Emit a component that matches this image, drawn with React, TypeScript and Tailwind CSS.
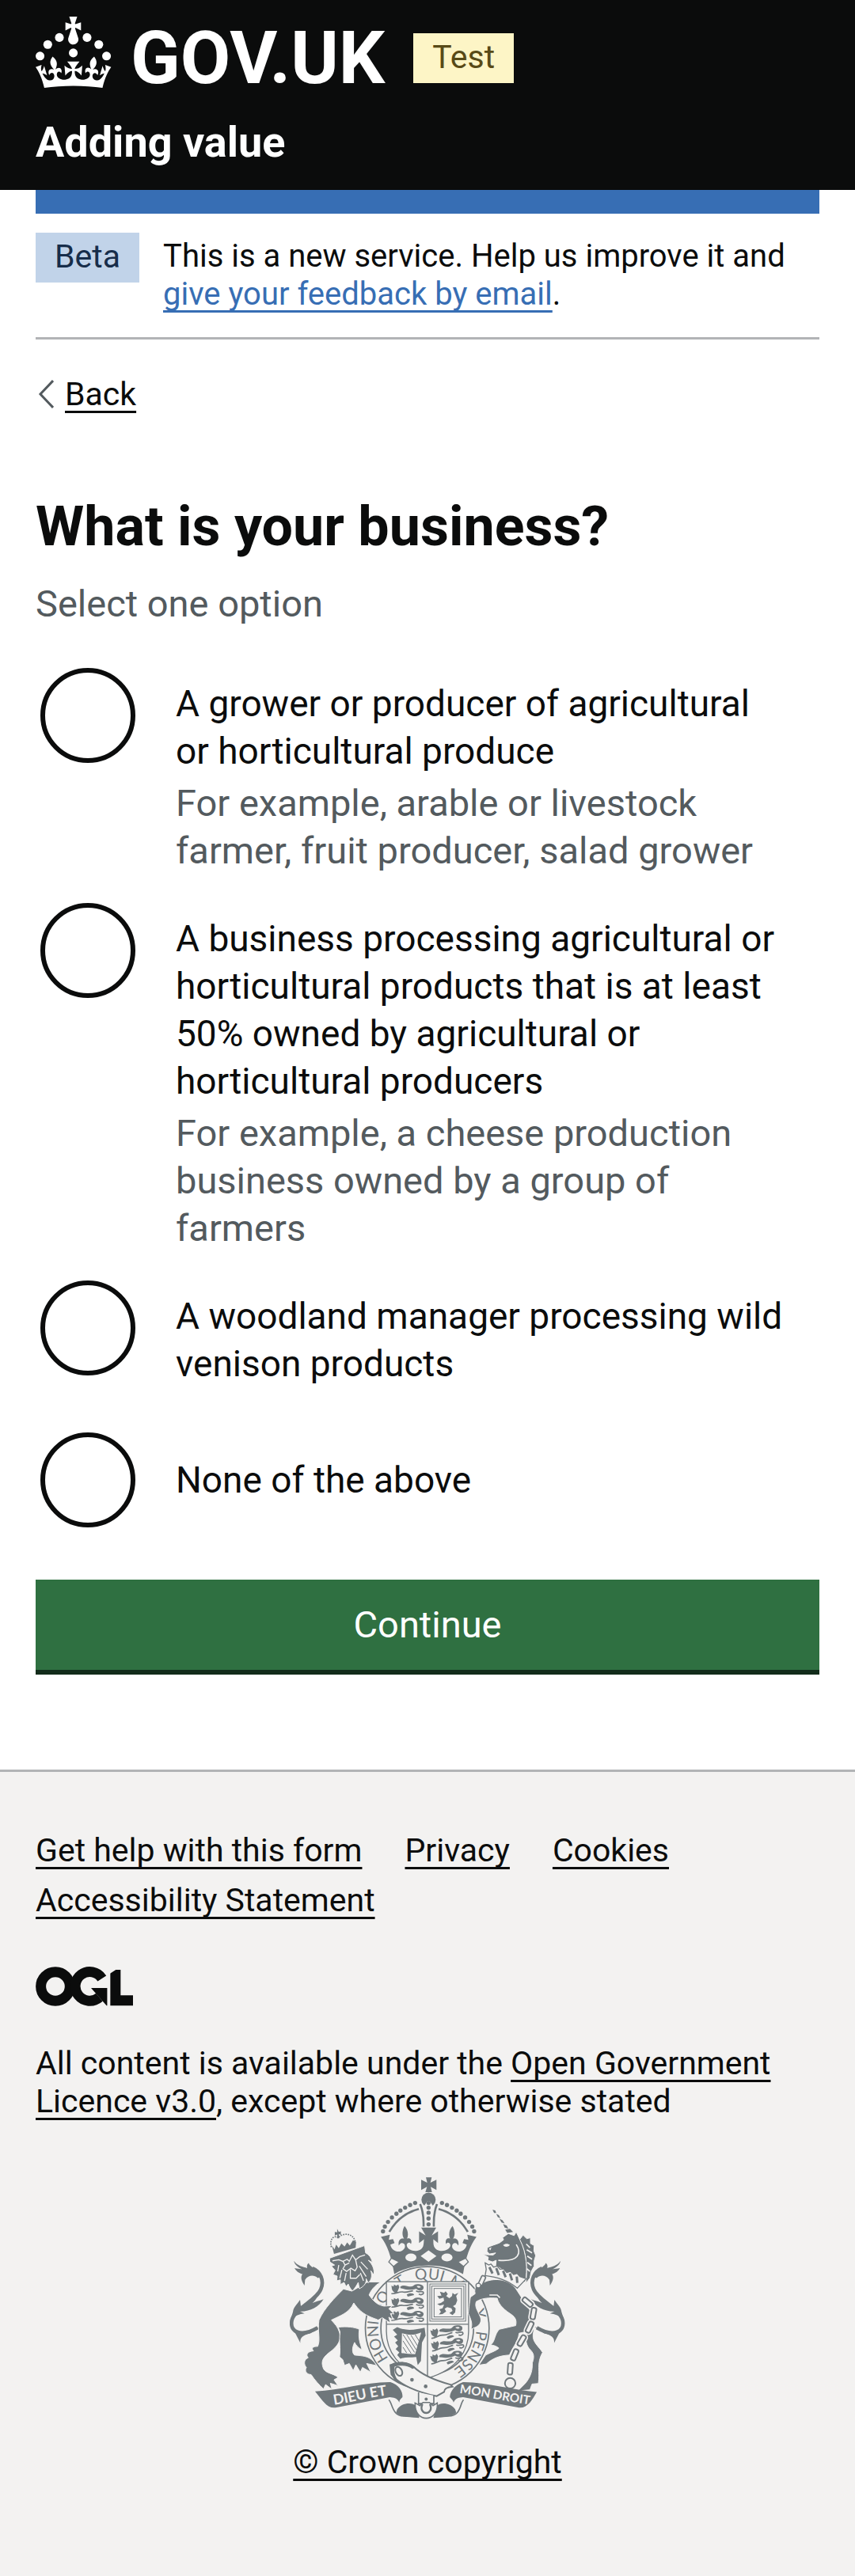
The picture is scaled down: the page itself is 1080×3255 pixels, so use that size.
import React from "react";

const linkBase =
  "underline decoration-[3px] underline-offset-[7px] [text-decoration-skip-ink:none]";

const options = [
  {
    id: "grower",
    label: "A grower or producer of agricultural or horticultural produce",
    hint: "For example, arable or livestock farmer, fruit producer, salad grower",
  },
  {
    id: "processor",
    label:
      "A business processing agricultural or horticultural products that is at least 50% owned by agricultural or horticultural producers",
    hint: "For example, a cheese production business owned by a group of farmers",
  },
  {
    id: "woodland",
    label: "A woodland manager processing wild venison products",
  },
  { id: "none", label: "None of the above" },
];

function Crown() {
  return (
    <svg
      viewBox="0 0 64 60"
      className="h-[90px] w-24 shrink-0"
      fill="currentColor"
      aria-hidden="true"
    >
      <circle cx="20" cy="17.6" r="3.7" />
      <circle cx="10.2" cy="23.5" r="3.7" />
      <circle cx="3.7" cy="33.2" r="3.7" />
      <circle cx="31.7" cy="30.6" r="3.7" />
      <circle cx="43.3" cy="17.6" r="3.7" />
      <circle cx="53.2" cy="23.5" r="3.7" />
      <circle cx="59.7" cy="33.2" r="3.7" />
      <path d="M33.1,9.8c.2-.1.3-.3.5-.5l4.6,2.4v-6.8l-4.6,1.5c-.1-.2-.3-.3-.5-.5l1.9-5.9h-6.7l1.9,5.9c-.2.1-.3.3-.5.5l-4.6-1.5v6.8l4.6-2.4c.1.2.3.3.5.5l-2.6,8c-.9,2.8,1.2,5.7,4.1,5.7h0c3,0,5.1-2.9,4.1-5.7l-2.6-8ZM37,37.9s-3.4,3.8-4.1,6.1c2.2,0,4.2-.5,6.4-2.8l-.7,8.5c-2-2.8-4.4-4.1-5.7-3.8.1,3.1.5,6.7,5.8,7.2,3.7.3,6.7-1.5,7-3.8.4-2.6-2-4.3-3.7-1.6-1.4-4.5,2.4-6.1,4.9-3.2-1.9-4.5-1.8-7.7,2.4-10.9,3,4,2.6,7.3-1.2,11.1,2.4-1.3,6.2,0,4,4.6-1.2-2.8-3.7-2.2-4.2.2-.3,1.7.7,3.7,3,4.2,1.9.3,4.7-.9,7-5.9-1.3,0-2.4.7-3.9,1.7l2.4-8c.6,2.3,1.4,3.7,2.2,4.5.6-1.6.5-2.8,0-5.3l5,1.8c-2.6,3.6-5.2,8.7-7.3,17.5-7.4-1.1-15.7-1.7-24.5-1.7h0c-8.8,0-17.1.6-24.5,1.7-2.1-8.9-4.7-13.9-7.3-17.5l5-1.8c-.5,2.5-.6,3.7,0,5.3.8-.8,1.6-2.3,2.2-4.5l2.4,8c-1.5-1-2.6-1.7-3.9-1.7,2.3,5,5.2,6.2,7,5.9,2.3-.4,3.3-2.4,3-4.2-.5-2.4-3-3.1-4.2-.2-2.2-4.6,1.6-6,4-4.6-3.7-3.7-4.2-7.1-1.2-11.1,4.2,3.2,4.3,6.4,2.4,10.9,2.5-2.8,6.3-1.3,4.9,3.2-1.8-2.7-4.1-1-3.7,1.6.3,2.3,3.3,4.1,7,3.8,5.4-.5,5.7-4.2,5.8-7.2-1.3-.2-3.7,1-5.7,3.8l-.7-8.5c2.2,2.3,4.2,2.7,6.4,2.8-.7-2.3-4.1-6.1-4.1-6.1h10.6,0Z" />
    </svg>
  );
}

function OglLogo() {
  return (
    <svg
      viewBox="0 0 483 196"
      className="h-[50px] w-[123px]"
      role="img"
      aria-label="Open Government Licence"
      fill="none"
      stroke="currentColor"
      strokeWidth="51"
    >
      <circle cx="98" cy="98" r="72" />
      <path d="M329 58.500A72 72 0 1 0 316 152" />
      <path
        d="M275 105.700h80v87.800h-3L299 133z"
        fill="currentColor"
        stroke="none"
      />
      <path d="M396 16V168H483" />
      <path d="M366 0h56L366 36z" fill="#f3f2f1" stroke="none" />
    </svg>
  );
}

const pearls = [
  [408, 268], [415, 250], [427, 232], [442, 215], [459, 201],
  [474, 189], [492, 178], [511, 168], [530, 160],
];

const chain = [
  [957, 537, -50], [979, 580, 10], [965, 632, 25], [935, 683, 30],
  [908, 737, 22], [891, 790, 4],
];

function Tail() {
  return (
    <g>
      <path d="M140 408C170 420 186 455 172 488C155 530 75 560 62 605C52 650 95 672 160 634" fill="none" stroke="#6f777b" strokeWidth="14" />
      <path d="M70 380C82 400 105 402 120 408C118 398 120 392 126 388C128 402 160 410 174 440L160 445C145 432 125 434 112 452L110 474C98 455 94 442 102 430C88 428 78 418 72 408C84 410 92 410 100 412C82 402 72 394 70 380Z" />
      <path d="M158 500C150 530 120 545 96 552L93 528C82 545 68 555 66 574L58 600C75 590 90 582 110 580C100 574 92 572 86 572C125 576 165 556 182 526C165 532 150 536 140 540C154 528 160 516 158 500Z" />
      <path d="M70 645L94 692C92 672 104 662 132 656L172 628C125 652 90 652 70 645Z" />
    </g>
  );
}

function Passant({ x, y }: { x: number; y: number }) {
  return (
    <g transform={`translate(${x} ${y})`}>
      <path d="M2 4L10 8L12 0L20 5L28 0L32 10L28 20C24 26 26 30 20 34C14 30 6 26 4 18Z" />
      <path d="M36 8C50 -2 62 8 76 8C88 8 86 -1 100 -1C122 -1 128 8 122 18C116 26 104 24 96 16C86 20 60 22 46 16L36 14Z" />
      <path d="M2 34C14 38 30 26 44 28C60 32 74 24 84 24M96 24C104 32 112 24 122 28C128 36 114 42 106 36" fill="none" stroke="#6f777b" strokeWidth="5" />
      <path d="M60 38C70 30 88 32 88 40L64 46Z" />
      <path d="M98 6C106 4 112 6 114 10C108 14 100 12 98 6Z" fill="#f3f2f1" />
    </g>
  );
}

function RoyalArms() {
  return (
    <svg
      viewBox="54 62 1046 920"
      className="h-[306px] w-[348px]"
      fill="#6f777b"
      aria-hidden="true"
    >
      {/* Garter */}
      <ellipse cx="576" cy="636" rx="235" ry="234" fill="#f3f2f1" stroke="#6f777b" strokeWidth="5" />
      <ellipse cx="576" cy="636" rx="176" ry="176" fill="none" stroke="#6f777b" strokeWidth="5" />
      <path id="garter-line" d="M576 822A186 186 0 0 1 576 450A186 186 0 0 1 576 822" fill="none" />
      <g fontFamily="Lato, sans-serif" fontSize="58" textAnchor="middle">
        <text><textPath href="#garter-line" startOffset="244">HONI</textPath></text>
        <text><textPath href="#garter-line" startOffset="390">SO</textPath></text>
        <text><textPath href="#garter-line" startOffset="486">T</textPath></text>
        <text><textPath href="#garter-line" startOffset="592">QUI</textPath></text>
        <text><textPath href="#garter-line" startOffset="692">M</textPath></text>
        <text><textPath href="#garter-line" startOffset="826">Y</textPath></text>
        <text><textPath href="#garter-line" startOffset="974">PENSE</textPath></text>
      </g>

      {/* Shield */}
      <path d="M421 459H733V640C736 720 690 794 577 826C464 794 418 720 421 640Z" fill="#f3f2f1" stroke="#6f777b" strokeWidth="4" />
      <path d="M577 460V824M421 621H733" fill="none" stroke="#6f777b" strokeWidth="4" />
      <Passant x={438} y={470} />
      <Passant x={438} y={521} />
      <Passant x={438} y={571} />
      <g fill="none" stroke="#6f777b" strokeWidth="3">
        <rect x="586" y="468" width="136" height="141" />
        <rect x="593" y="476" width="122" height="125" />
        <rect x="602" y="485" width="104" height="108" />
      </g>
      <path d="M624 497L640 502L646 496L654 506L648 514L660 522L670 514L672 502L680 508L694 502L686 514L690 530L684 546L674 552L684 560L682 576L672 586L660 578L672 570L668 560L652 556L642 562L648 572L634 582L620 584L628 574L622 564L634 560L640 546L624 550L614 544L628 540L640 532L638 520L622 524L614 514L630 512Z" />
      <g transform="rotate(-8 650 700)">
        <Passant x={594} y={632} />
        <Passant x={590} y={680} />
        <Passant x={580} y={728} />
      </g>
      <path d="M445 642L462 632C500 650 535 640 566 634L570 664L556 690L552 760L540 776L534 745C510 748 490 745 474 752L462 738L470 728L456 715L466 705L454 690L464 682L450 668L462 660Z" />
      <path d="M480 655C510 665 535 660 553 652L530 735C510 735 490 732 478 730Z" fill="#f3f2f1" />
      <path d="M484 660L528 728M484 684L515 732M484 708L498 730M498 660L534 718M514 662L540 704M530 660L546 686" stroke="#6f777b" strokeWidth="3" />

      {/* Crown */}
      <path d="M571 63H593L588 83L611 72V111L589 99L594 119H569L575 99L553 111V72L576 83Z" />
      <circle cx="581" cy="148" r="27" />
      <path d="M545 165L562 250H600L618 165L598 172L590 160C585 150 577 150 572 160L564 172Z" fill="#f3f2f1" />
      <path d="M549 164C560 190 563 220 562 250M613 164C603 190 600 220 601 250" fill="none" stroke="#6f777b" strokeWidth="8" />
      {[160, 178, 197, 219, 241].map((y) => (
        <circle key={y} cx="581" cy={y} r="8" />
      ))}
      <path d="M432 270C458 225 498 195 544 183M730 270C704 225 664 195 619 183" fill="none" stroke="#6f777b" strokeWidth="8" />
      {pearls.map(([x, y]) => (
        <g key={x}>
          <circle cx={x} cy={y} r="8" />
          <circle cx={1162 - x} cy={y} r="8" />
        </g>
      ))}
      <path d="M400 289L434 281L430 300L446 297L452 312L436 318C440 344 474 356 490 332C494 322 490 312 480 312C474 312 470 318 468 322C464 304 474 292 488 296C478 280 482 262 490 248C503 262 506 282 499 296C512 290 520 304 514 316C510 308 500 310 498 320C500 345 548 352 560 326C564 314 562 306 564 298L545 312V268L570 284L553 254H610L593 284L617 268V312L599 298C600 306 598 314 602 326C614 352 662 345 664 320C662 310 652 308 648 316C642 304 650 290 663 296C656 282 659 262 672 248C680 262 684 280 674 296C688 292 698 304 694 322C692 318 688 312 682 312C672 312 668 322 672 332C688 356 722 344 726 318L710 312L716 297L732 300L728 281L763 289C740 318 722 366 712 430C640 386 522 386 451 430C440 366 424 318 400 289Z" />
      <g fill="#f3f2f1">
        <ellipse cx="514" cy="367" rx="21" ry="15" />
        <ellipse cx="651" cy="367" rx="21" ry="15" />
        <path d="M581 340L611 362L581 384L551 362Z" />
        <path d="M440 370L470 384L448 402L430 384Z" stroke="#6f777b" strokeWidth="4" />
        <path d="M722 370L692 384L714 402L732 384Z" stroke="#6f777b" strokeWidth="4" />
      </g>

      {/* Lion */}
      <Tail />
      <g stroke="#f3f2f1" strokeWidth="3">
        <path d="M258 487C225 520 185 560 165 605C158 645 172 680 160 705C140 705 135 712 144 722C118 725 115 738 124 748C105 756 108 775 117 785C108 800 120 812 135 812C150 835 165 850 182 867L190 850L214 868L208 845L237 854L222 832L238 823C215 805 195 810 182 790C170 760 180 745 215 720C245 695 250 670 242 650C236 630 225 620 212 605C240 590 280 580 297 540C330 590 370 595 390 605L405 596L436 616L430 594L446 604L436 580L450 582L430 562L444 550L412 552C385 548 370 530 355 510C362 492 375 475 400 460L350 460L290 495Z" />
        <path d="M238 632C270 628 300 632 318 640C312 680 325 700 328 718C315 712 305 700 300 690C290 710 290 730 300 738C330 742 360 738 384 778L346 770L362 803L330 785L322 803L305 775L295 797L280 770L262 777L255 755L243 745C248 710 240 690 245 650Z" />
        <path d="M205 370L338 322L342 350C355 356 364 368 368 386L352 378C368 392 376 412 374 434L362 418C368 438 364 452 352 464L344 448C346 466 334 478 318 486L314 462C308 474 300 486 292 494C284 486 280 478 276 468L268 478L260 462L246 470L246 452L232 456L234 438L218 432L226 416L212 400L224 396L206 384Z" />
      </g>
      <g fill="none" stroke="#f3f2f1" strokeWidth="4">
        <path d="M216 380L240 376L256 382L272 374L280 382L292 358L304 376L320 364L340 358M256 382L264 396L280 388M264 396L256 410L270 420L286 408L302 418L310 404L304 376M284 412V446H306L320 432M324 384L350 412M318 400L344 440M322 426L334 456M240 396L236 420M252 414L244 446M268 426L262 456" />
      </g>
      <path d="M234 258L240 270L248 268V282L240 278L242 294H234L234 280L225 284V270L234 272Z" />
      <path d="M212 328C204 300 220 280 238 292C256 272 294 274 302 306" fill="none" stroke="#6f777b" strokeWidth="5" strokeDasharray="5 4" />
      <path d="M214 322L224 336L230 318L240 332L250 314L262 326L272 310L282 322L294 302L306 308L304 330L222 354Z" />

      {/* Unicorn */}
      <g transform="translate(1152 0) scale(-1 1)">
        <Tail />
      </g>
      <path d="M824 186L834 188L838 198L830 198ZM838 202L848 206L854 218L844 214ZM850 220L862 226L870 238L858 234ZM864 240L878 246L884 258L870 254ZM872 262L890 258L902 270L880 274Z" />
      <g stroke="#f3f2f1" strokeWidth="3">
        <path d="M940 282L954 296L968 292L968 314L982 322L981 342L988 360L982 380L982 400L971 420L966 445L950 466C958 410 952 340 926 300Z" />
        <path d="M862 292L884 276L906 284L914 270L928 300C954 350 958 415 948 462L900 436L860 412L836 398L838 378L824 384L806 378L808 366L788 356L826 358L836 350L812 354L803 344L804 330C818 322 835 318 850 312L866 300Z" />
        <path d="M758 505C752 480 765 462 790 462C825 445 880 445 912 485C935 520 950 545 968 570C985 605 985 625 978 660C975 690 1000 705 1014 728C990 770 1005 800 998 846L974 848L966 870L920 874L948 846C970 820 976 795 975 768C985 740 980 730 962 712C948 690 952 680 948 650L925 655C920 690 905 700 888 738C850 740 825 750 800 772L772 776L798 738C825 725 840 720 848 712C835 700 822 702 818 698C835 685 830 660 850 640L912 626C918 600 905 590 890 580C860 560 845 540 842 522C815 520 785 520 762 535C755 555 768 570 776 590C786 608 776 625 760 632L742 640C750 615 740 600 732 580C734 555 738 530 740 518Z" />
      </g>
      <path d="M864 320C872 313 884 314 890 320C882 329 870 329 864 320ZM810 334L820 328L816 340Z" fill="#f3f2f1" />
      <path d="M914 318C935 350 925 385 846 378M952 316L966 330M954 338L974 350M956 362L974 374M956 386L972 398M954 410L966 420M812 510H842L852 520" fill="none" stroke="#f3f2f1" strokeWidth="5" />
      <path d="M796 388L810 396L818 392L828 404L842 400L852 412L866 410L878 424L892 420L904 432L918 428L928 440L952 448L918 484C880 452 840 442 796 436L800 412Z" fill="#f3f2f1" stroke="#6f777b" strokeWidth="4" />
      <path d="M812 404L824 428M838 408L848 434M864 418L874 442M890 428L898 454M916 440L918 464" stroke="#6f777b" strokeWidth="9" />
      <g fill="none" strokeWidth="16" stroke="#f3f2f1">
        {chain.map(([x, y, a]) => (
          <rect key={y} x={x - 9} y={y - 22} width="18" height="44" rx="7" transform={`rotate(${a} ${x} ${y})`} />
        ))}
      </g>
      <g fill="#f3f2f1" strokeWidth="6" stroke="#6f777b">
        {chain.map(([x, y, a]) => (
          <rect key={y} x={x - 9} y={y - 22} width="18" height="44" rx="7" transform={`rotate(${a} ${x} ${y})`} />
        ))}
        <circle cx="891" cy="845" r="20" />
        <rect x="776" y="436" width="16" height="38" rx="6" transform="rotate(25 784 455)" strokeWidth="5" />
        <circle cx="770" cy="474" r="9" strokeWidth="4" />
      </g>

      {/* Garter strap and buckle */}
      <path d="M436 776C470 762 500 764 524 782C560 818 620 838 664 850L672 858C650 860 640 868 640 878L612 894C540 880 470 850 440 812Z" fill="#f3f2f1" stroke="#6f777b" strokeWidth="6" />
      <path d="M436 776L448 768C490 760 512 768 530 786L520 790C500 776 470 776 452 782C448 810 456 826 478 850C444 838 436 810 436 776Z" />
      <ellipse cx="468" cy="800" rx="12" ry="18" fill="none" stroke="#6f777b" strokeWidth="6" transform="rotate(-28 468 800)" />
      <circle cx="518" cy="832" r="7" />
      <circle cx="570" cy="857" r="7" />
      <path d="M543 880V922H601V892" fill="#f3f2f1" stroke="#6f777b" strokeWidth="5" />
      <circle cx="572" cy="905" r="6" />

      {/* Motto ribbon */}
      <path d="M150 876C250 872 340 840 436 841C468 850 484 878 482 898C474 906 470 910 470 918C462 900 446 900 434 898L232 937C196 944 180 912 150 876Z" />
      <path d="M992 878C900 872 800 840 712 841C682 850 662 878 662 898C668 906 674 910 676 918C684 900 698 900 712 898L920 937C956 944 976 906 992 878Z" />
      <path d="M430 908C445 920 440 970 490 970L545 974M714 908C700 920 706 970 656 970L600 974" fill="none" stroke="#6f777b" strokeWidth="5" />
      <path d="M462 944C480 916 522 918 532 930L546 974C510 974 470 974 458 956ZM682 944C664 916 622 918 614 930L600 974C636 974 674 974 686 956Z" />
      <path d="M530 920L548 930L560 918H584L598 930L614 920C618 960 592 978 572 978C552 978 528 960 530 920Z" fill="#f3f2f1" stroke="#6f777b" strokeWidth="5" />
      <path d="M558 924C548 944 560 958 572 958C584 958 596 944 586 924" fill="none" stroke="#6f777b" strokeWidth="7" />
      <path id="motto-left" d="M222 927C300 916 370 893 462 886" fill="none" />
      <path id="motto-right" d="M698 882C780 892 860 912 990 930" fill="none" />
      <g fill="#f3f2f1" fontFamily="Lato, sans-serif" fontWeight="700" fontSize="54">
        <text><textPath href="#motto-left">DIEU ET</textPath></text>
        <text fontSize="46"><textPath href="#motto-right">MON DROIT</textPath></text>
      </g>
    </svg>
  );
}

export default function App() {
  return (
    <div className="min-h-screen bg-[#f3f2f1] font-[Roboto,sans-serif] text-[41px] leading-[48px] text-[#0b0c0c]">
      <header className="bg-[#0b0c0c] px-[45px] pt-[21px] pb-[30px] text-white">
        <div className="flex items-start">
          <a href="#" aria-label="GOV.UK" className="flex items-start gap-6">
            <Crown />
            <span className="pt-2 text-[92px] leading-[90px] font-bold">GOV.UK</span>
          </a>
          <strong className="mt-[21px] ml-9 bg-[#fdf5c6] px-6 pt-[6px] pb-[9px] font-normal text-[#584a17]">
            Test
          </strong>
        </div>
        <a href="#" className="mt-[31px] block text-[54px] leading-[60px] font-bold">
          Adding value
        </a>
      </header>

      <div className="bg-white px-[45px] pb-[120px]">
        <div className="h-[30px] bg-[#376eb4]" />
        <div className="flex items-start border-b-[3px] border-[#b2b4b6] pt-6 pb-6">
          <strong className="mr-[30px] bg-[#c1d3e9] px-6 pt-[6px] pb-[9px] font-normal text-[#172d4a]">
            Beta
          </strong>
          <p className="pt-[6px] pb-[6px] text-[40px]">
            This is a new service. Help us improve it and{" "}
            <a href="#" className={`${linkBase} text-[#376eb4]`}>
              give your feedback by email
            </a>
            .
          </p>
        </div>

        <a href="#" className="mt-[45px] inline-flex items-center">
          <svg viewBox="0 0 20 36" className="mr-[14px] ml-[3px] h-9 w-5" fill="none" stroke="#535a5e" strokeWidth="3" aria-hidden="true">
            <path d="M19 1L3 18L19 35" />
          </svg>
          <span className={linkBase}>Back</span>
        </a>

        <main className="pt-[102px]">
          <form>
            <fieldset aria-describedby="business-hint">
              <legend>
                <h1 className="text-[70px] leading-[75px] font-bold">What is your business?</h1>
              </legend>
              <p id="business-hint" className="mt-[30px] mb-[45px] text-[47px] leading-[60px] text-[#535a5e]">
                Select one option
              </p>
              <div className="flex flex-col gap-[30px]">
                {options.map((o) => (
                  <div key={o.id} className="flex min-h-[132px] items-start leading-[60px]">
                    <input
                      type="radio"
                      name="business"
                      id={o.id}
                      aria-describedby={o.hint ? `${o.id}-hint` : undefined}
                      className="m-[6px] size-[120px] shrink-0 appearance-none rounded-full border-[6px] border-[#0b0c0c] bg-white checked:shadow-[inset_0_0_0_24px_white] checked:bg-[#0b0c0c]"
                    />
                    <div className="min-w-0 flex-1 self-center pr-[45px] pl-[45px]">
                      <label htmlFor={o.id} className="block py-[21px] text-[46px]">
                        {o.label}
                      </label>
                      {o.hint && (
                        <p id={`${o.id}-hint`} className="-mt-[15px] text-[47px] text-[#535a5e]">
                          {o.hint}
                        </p>
                      )}
                    </div>
                  </div>
                ))}
              </div>
            </fieldset>
            <button
              type="submit"
              className="mt-[60px] block w-full border-b-[6px] border-[#122c1b] bg-[#2f7041] py-[27px] text-[47px] leading-[60px] text-white"
            >
              Continue
            </button>
          </form>
        </main>
      </div>

      <footer className="border-t-[3px] border-[#b2b4b6] px-[45px] pt-[75px] pb-[90px]">
        <ul className="flex flex-wrap gap-x-[54px] gap-y-[15px]">
          {["Get help with this form", "Privacy", "Cookies", "Accessibility Statement"].map((t) => (
            <li key={t}>
              <a href="#" className={linkBase}>
                {t}
              </a>
            </li>
          ))}
        </ul>
        <div className="mt-[60px]">
          <OglLogo />
        </div>
        <p className="mt-[48px]">
          All content is available under the{" "}
          <a href="#" className={linkBase}>
            Open Government Licence v3.0
          </a>
          , except where otherwise stated
        </p>
        <div className="mt-[72px] flex justify-center">
          <a href="#" className="flex flex-col items-center gap-[30px]">
            <RoyalArms />
            <span className={linkBase}>© Crown copyright</span>
          </a>
        </div>
      </footer>
    </div>
  );
}
